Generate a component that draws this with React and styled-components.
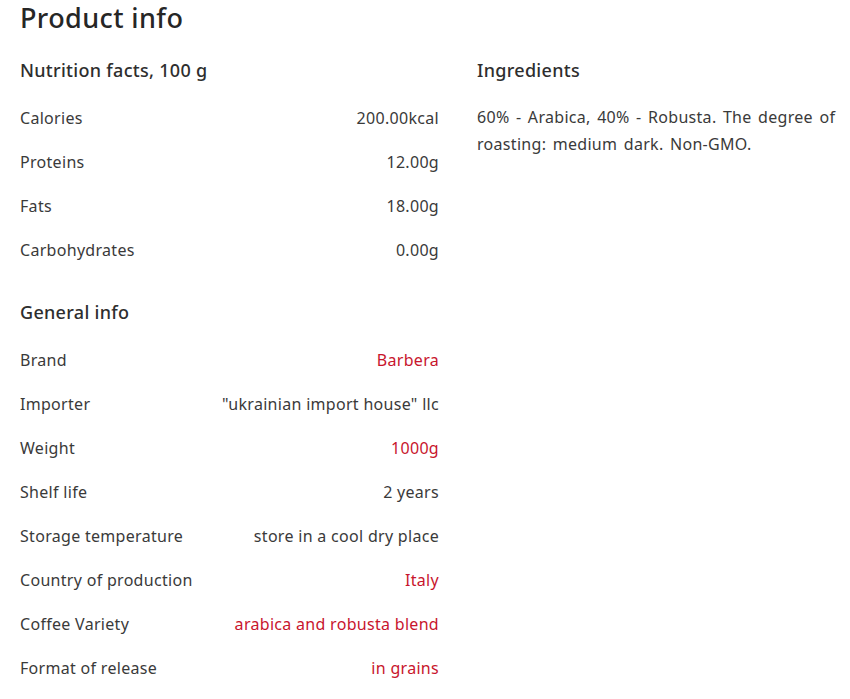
import React from "react"
import styled, { createGlobalStyle } from "styled-components"

const nutrition = [
	{ label: "Calories", value: "200.00kcal" },
	{ label: "Proteins", value: "12.00g" },
	{ label: "Fats", value: "18.00g" },
	{ label: "Carbohydrates", value: "0.00g" },
]

const general = [
	{ label: "Brand", value: "Barbera", accent: true },
	{ label: "Importer", value: "\"ukrainian import house\" llc" },
	{ label: "Weight", value: "1000g", accent: true },
	{ label: "Shelf life", value: "2 years" },
	{ label: "Storage temperature", value: "store in a cool dry place" },
	{ label: "Country of production", value: "Italy", accent: true },
	{ label: "Coffee Variety", value: "arabica and robusta blend", accent: true },
	{ label: "Format of release", value: "in grains", accent: true },
]

const App = () => {
	return (
		<React.Fragment>
			<GlobalStyle />
			<Page>
				<Title>Product info</Title>
				<Columns>
					<div>
						<Section>
							<Heading>Nutrition facts, 100 g</Heading>
							{nutrition.map(r => (
								<Row key={r.label}>
									<Label>{r.label}</Label>
									<Value>{r.value}</Value>
								</Row>
							))}
						</Section>
						<Section $gap>
							<Heading>General info</Heading>
							{general.map(r => (
								<Row key={r.label}>
									<Label>{r.label}</Label>
									<Value $accent={r.accent}>{r.value}</Value>
								</Row>
							))}
						</Section>
					</div>
					<Section>
						<Heading>Ingredients</Heading>
						<Text>
							60% - Arabica, 40% - Robusta. The degree of roasting: medium dark. Non-GMO.
						</Text>
					</Section>
				</Columns>
			</Page>
		</React.Fragment>
	)
}

const GlobalStyle = createGlobalStyle`
	body {
		margin: 0;
		background: #fff;
		font-family: "Noto Sans", "Lato", sans-serif;
		color: #3a3a3a;
		letter-spacing: 0.3px;
	}
`

const Page = styled.div`
	padding: 0 12px 0 20px;
`

const Title = styled.h1`
	margin: 0;
	font-size: 27px;
	line-height: 36px;
	font-weight: 500;
	letter-spacing: 0.4px;
	color: #262626;
`

const Columns = styled.div`
	display: grid;
	grid-template-columns: 419px 1fr;
	column-gap: 38px;
	margin-top: 11px;
`

const Section = styled.div`
	margin-top: ${props => props.$gap ? "17px" : "0"};
`

const Heading = styled.h2`
	margin: 0;
	padding: 13px 0 15px;
	font-size: 18px;
	line-height: 21px;
	font-weight: 500;
	color: #2e2e2e;
`

const Row = styled.div`
	display: flex;
	justify-content: space-between;
	align-items: center;
	height: 44px;
	font-size: 16px;
`

const Label = styled.span`
	color: #3a3a3a;
`

const Value = styled.span`
	color: ${props => props.$accent ? "#c8152d" : "#3a3a3a"};
	text-align: right;
`

const Text = styled.p`
	margin: 8px 0 0;
	font-size: 16px;
	line-height: 27px;
	word-spacing: 2px;
	color: #3a3a3a;
`

export default App
